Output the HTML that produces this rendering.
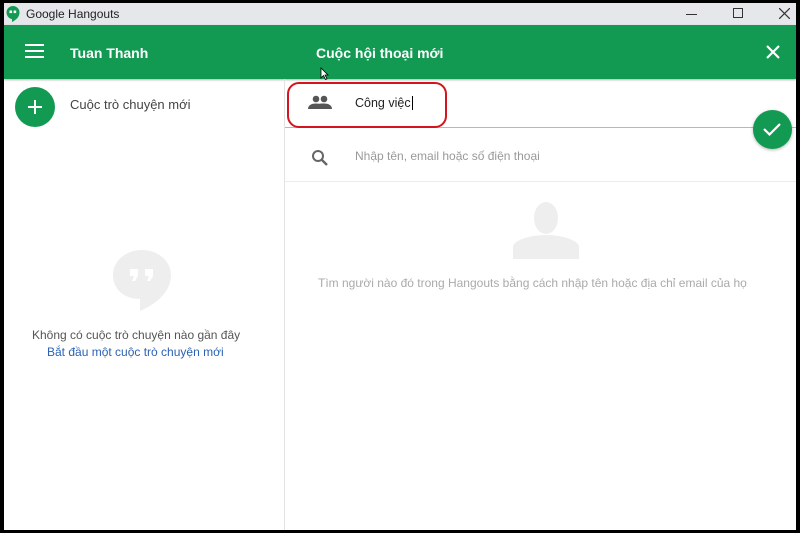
<!DOCTYPE html>
<html><head><meta charset="utf-8"><style>
*{margin:0;padding:0;box-sizing:border-box}
body{width:800px;height:533px;background:#000;position:relative;overflow:hidden;font-family:"Liberation Sans",sans-serif}
.win{position:absolute;left:4px;top:3px;width:792px;height:527px;background:#fff}
.title{position:absolute;left:0;top:0;width:792px;height:22px;background:#e6e7eb}
.title span{position:absolute;left:22px;top:4px;font-size:12px;color:#222}
.hdr{position:absolute;left:0;top:22px;width:792px;height:54px;background:#139a52;box-shadow:0 1px 2px rgba(0,0,0,.3)}
.hdr .t{position:absolute;color:#fff;font-size:14px;font-weight:bold;top:20px}
.div{position:absolute;left:280px;top:76px;width:1px;height:451px;background:#e2e2e2}
.txt{position:absolute;font-size:13px}
</style></head><body>
<div class="win">
 <div class="title">
  <svg style="position:absolute;left:2px;top:3px" width="14" height="16" viewBox="0 0 14 16"><path d="M7 0a6.5 6.5 0 0 0-6.5 6.5C.5 10 3.5 13 6 13v3c4-2 7.5-5 7.5-9.5A6.5 6.5 0 0 0 7 0z" fill="#139a52"/><rect x="3.5" y="4.5" width="2.6" height="2.6" fill="#fff"/><rect x="7.6" y="4.5" width="2.6" height="2.6" fill="#fff"/></svg>
  <span>Google Hangouts</span>
  <div style="position:absolute;left:682px;top:11px;width:11px;height:1px;background:#333"></div>
  <div style="position:absolute;left:729px;top:5px;width:10px;height:10px;border:1px solid #333"></div>
  <svg style="position:absolute;left:775px;top:5px" width="11" height="11"><path d="M0 0L11 11M11 0L0 11" stroke="#333" stroke-width="1.2"/></svg>
 </div>
 <div class="hdr">
  <div style="position:absolute;left:21px;top:19px;width:19px;height:2px;background:#fff;box-shadow:0 6px 0 #fff,0 12px 0 #fff"></div>
  <div class="t" style="left:66px">Tuan Thanh</div>
  <div class="t" style="left:312px">Cuộc hội thoại mới</div>
  <svg style="position:absolute;left:762px;top:20px" width="14" height="14"><path d="M1 1L13 13M13 1L1 13" stroke="#fff" stroke-width="2.2"/></svg>
  <svg style="position:absolute;left:316px;top:42px" width="9" height="13"><path d="M1 1V11L3.5 8.5 5.5 12.5 7 11.8 5 8H8Z" fill="#fff" stroke="#000" stroke-width=".8"/></svg>
 </div>
 <div style="position:absolute;left:11px;top:84px;width:40px;height:40px;border-radius:50%;background:#139a52"></div>
 <div style="position:absolute;left:24px;top:103px;width:14px;height:2px;background:#fff"></div>
 <div style="position:absolute;left:30px;top:97px;width:2px;height:14px;background:#fff"></div>
 <div class="txt" style="left:66px;top:94px;color:#444">Cuộc trò chuyện mới</div>
 <div class="div"></div>
 <div style="position:absolute;left:281px;top:124px;width:511px;height:1px;background:#9cbbea"></div>
 <div style="position:absolute;left:281px;top:178px;width:511px;height:1px;background:#ececec"></div>
 <svg style="position:absolute;left:304px;top:92px" width="24" height="16" viewBox="0 0 24 16"><circle cx="8" cy="4" r="3.3" fill="#555"/><circle cx="16" cy="4" r="3.3" fill="#555"/><path d="M0 14c0-4 4-5.5 8-5.5s8 1.5 8 5.5zM10 14c0-2 0-4-1-5 2-.5 4-.5 7-.5 4 0 8 1.5 8 5.5z" fill="#555"/></svg>
 <div class="txt" style="left:351px;top:93px;color:#222;font-size:12.5px">Công việc<span style="border-left:1px solid #000;margin-left:1px"></span></div>
 <div style="position:absolute;left:283px;top:79px;width:160px;height:46px;border:2.5px solid #d4141e;border-radius:12px"></div>
 <svg style="position:absolute;left:307px;top:146px" width="18" height="18"><circle cx="7" cy="7" r="5" fill="none" stroke="#666" stroke-width="2"/><path d="M10.5 10.5L16 16" stroke="#666" stroke-width="2.4"/></svg>
 <div class="txt" style="left:351px;top:146px;color:#999;font-size:12px">Nhập tên, email hoặc số điện thoại</div>
 <div style="position:absolute;left:749px;top:107px;width:39px;height:39px;border-radius:50%;background:#139a52;box-shadow:0 1px 3px rgba(0,0,0,.3)"></div>
 <svg style="position:absolute;left:758px;top:117px" width="20" height="18"><path d="M2 9L7.5 14.5 18 4" fill="none" stroke="#fff" stroke-width="2.2"/></svg>
 <svg style="position:absolute;left:508px;top:198px" width="68" height="58"><ellipse cx="34" cy="17" rx="12" ry="16" fill="#eee"/><path d="M1 58V46C1 40 16 34 34 34S67 40 67 46V58Z" fill="#eee"/></svg>
 <div class="txt" style="left:314px;top:273px;color:#aaa;font-size:12px">Tìm người nào đó trong Hangouts bằng cách nhập tên hoặc địa chỉ email của họ</div>
 <svg style="position:absolute;left:108px;top:246px" width="60" height="62" viewBox="0 0 60 62"><path d="M30 1C14 1 1 12 1 26S12 50 28 50V62C46 54 59 42 59 26 59 12 46 1 30 1Z" fill="#eee"/><path d="M18 20h8v7l-3 5h-3l2-5h-4zM33 20h8v7l-3 5h-3l2-5h-4z" fill="#fff"/></svg>
 <div class="txt" style="left:28px;top:325px;color:#555;font-size:12px">Không có cuộc trò chuyện nào gần đây</div>
 <div class="txt" style="left:43px;top:342px;color:#2a62b5;font-size:12px">Bắt đầu một cuộc trò chuyện mới</div>
</div>
</body></html>
